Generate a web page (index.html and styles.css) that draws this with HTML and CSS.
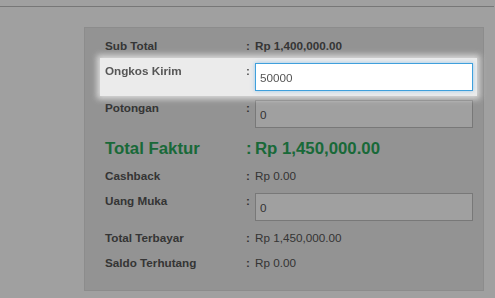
FILE: index.html
```html
<!DOCTYPE html>
<html lang="id">
<head>
    <meta charset="UTF-8">
    <meta name="viewport" content="width=device-width, initial-scale=1.0">
    <title>Ringkasan Faktur</title>
    <link rel="stylesheet" href="styles.css">
</head>

<body>
    <div class="topbar"></div>

    <div class="summary">
        <div class="row">
            <span class="label">Sub Total</span>
            <span class="colon">:</span>
            <span class="value strong">Rp 1,400,000.00</span>
        </div>
        <div class="row highlighted">
            <span class="label">Ongkos Kirim</span>
            <span class="colon">:</span>
            <input type="text" class="field focused" value="50000">
        </div>
        <div class="row">
            <span class="label">Potongan</span>
            <span class="colon">:</span>
            <input type="text" class="field" value="0">
        </div>
        <div class="row total">
            <span class="label">Total Faktur</span>
            <span class="colon">:</span>
            <span class="value">Rp 1,450,000.00</span>
        </div>
        <div class="row">
            <span class="label">Cashback</span>
            <span class="colon">:</span>
            <span class="value">Rp 0.00</span>
        </div>
        <div class="row">
            <span class="label">Uang Muka</span>
            <span class="colon">:</span>
            <input type="text" class="field" value="0">
        </div>
        <div class="row">
            <span class="label">Total Terbayar</span>
            <span class="colon">:</span>
            <span class="value">Rp 1,450,000.00</span>
        </div>
        <div class="row">
            <span class="label">Saldo Terhutang</span>
            <span class="colon">:</span>
            <span class="value">Rp 0.00</span>
        </div>
    </div>

    <!-- tour overlay, the highlighted row sits above it -->
    <div class="overlay"></div>
</body>
</html>
```

FILE: styles.css
```css
/* Reset */
* {
    margin: 0;
    padding: 0;
    box-sizing: border-box;
}

body {
    font-family: "Liberation Sans", Arial, sans-serif;
    font-size: 11.7px;
    line-height: 16px;
    color: #555;
    background-color: #fff;
    min-height: 298px;
}

/* Top bar line */
.topbar {
    height: 7px;
    margin-right: 1px;
    border-bottom: 1px solid #bebebe;
}

/* Summary panel */
.summary {
    width: 400px;
    margin: 20px 0 0 84px;
    padding: 10px 10px 19px 20px;
    background-color: #eaeaea;
    border: 1px solid #dfdfdf;
    display: flex;
    flex-direction: column;
    gap: 9px;
}

.row {
    display: grid;
    grid-template-columns: 141px 9px 1fr;
    align-items: start;
}

.label,
.colon {
    font-weight: bold;
}

.strong {
    font-weight: bold;
}

.total {
    margin-top: 2px;
    font-size: 16.8px;
    line-height: 20px;
    font-weight: bold;
    color: #29a85a;
}

/* Inputs */
.field {
    width: 100%;
    height: 28px;
    padding: 0 4px;
    font-family: inherit;
    font-size: 11.7px;
    color: #555;
    background-color: #fff;
    border: 1px solid #c0c0c0;
    outline: none;
}

.field.focused {
    border-color: #3fa0dc;
    box-shadow: 0 0 4px rgba(102, 175, 233, 0.6);
}

/* Tour overlay */
.overlay {
    position: fixed;
    inset: 0;
    background-color: rgba(0, 0, 0, 0.373);
    z-index: 10;
}

.highlighted {
    position: relative;
    z-index: 12;
}

.highlighted::before {
    content: "";
    position: absolute;
    inset: -5px -4px -5px -5px;
    background-color: #ebebeb;
    box-shadow: 0 0 6px 3px rgba(235, 235, 235, 0.8);
    z-index: -1;
}
```
